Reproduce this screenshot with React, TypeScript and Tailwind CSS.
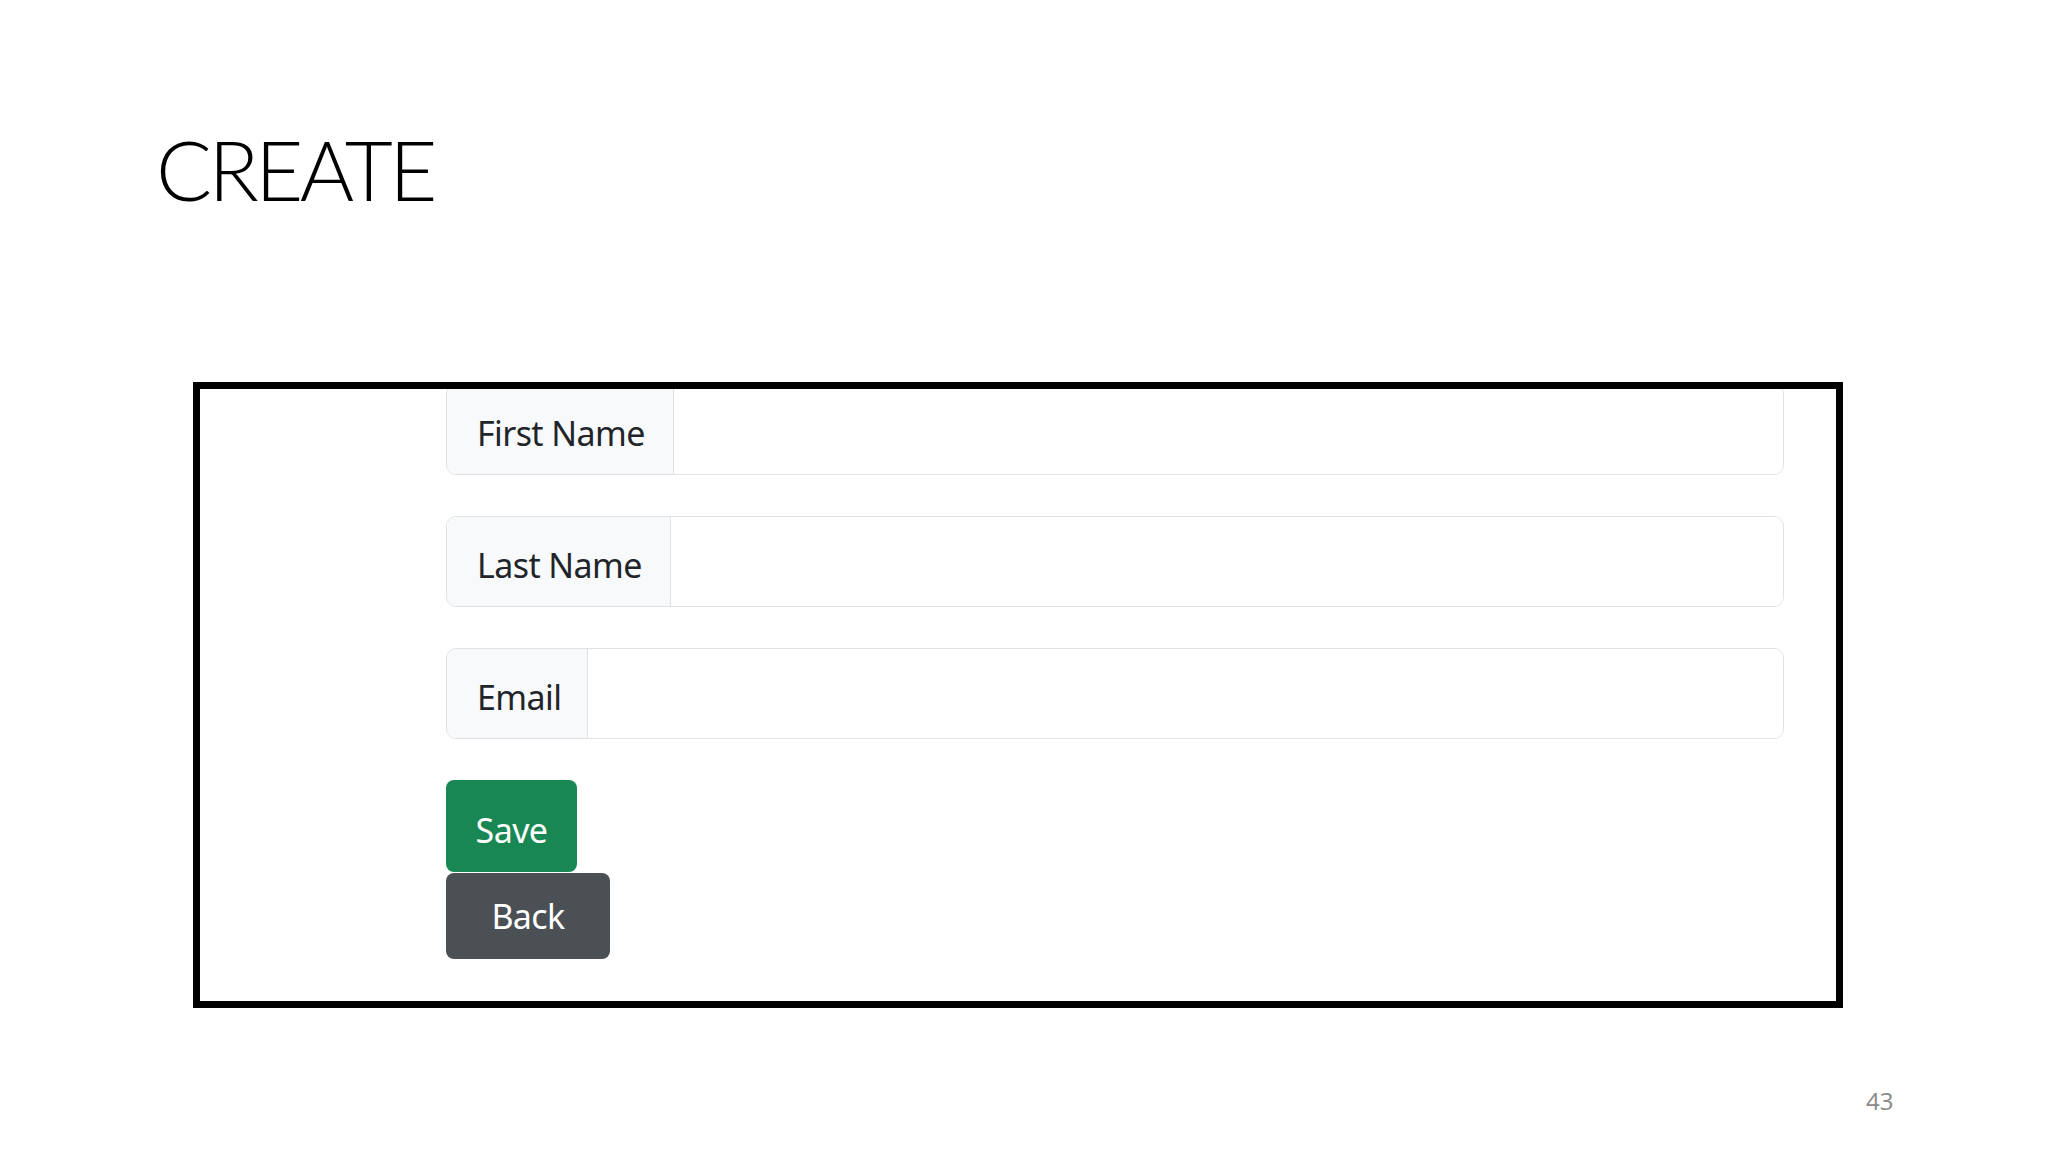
import React from "react";

const fields = [
  { label: "First Name", labelWidth: "w-[227px]" },
  { label: "Last Name", labelWidth: "w-[224px]" },
  { label: "Email", labelWidth: "w-[141px]" },
];

const App = () => {
  return (
    <div className="w-[2048px] h-[1152px] bg-white relative overflow-hidden font-['Noto_Sans',sans-serif]">
      {/* Slide title */}
      <h1 className="pl-[156px] pt-[119px] h-[382px] font-['Lato',sans-serif] font-light text-[83px] leading-[100px] text-black tracking-[-3.6px]">
        CREATE
      </h1>

      {/* Screenshot frame */}
      <div className="ml-[193px] w-[1650px] h-[626px] border-[7px] border-black overflow-hidden pl-[246px] pr-[52px]">
        <div className="flex flex-col gap-[41px] -mt-[5px]">
          {fields.map((f) => (
            <div
              key={f.label}
              className="flex h-[91px] border border-[#dee2e6] rounded-[10px] overflow-hidden"
            >
              <div
                className={`${f.labelWidth} shrink-0 flex items-center pl-[30px] pt-[8px] bg-[#f8f9fa] border-r border-[#dee2e6] text-[34px] tracking-[-0.6px] text-[#212529]`}
              >
                {f.label}
              </div>
              <input className="flex-1 bg-white outline-none" />
            </div>
          ))}

          <div className="flex flex-col gap-[1px]">
            <button className="w-[131px] h-[92px] pt-[8px] rounded-[8px] bg-[#198754] text-white text-[34px] tracking-[-0.6px] flex items-center justify-center">
              Save
            </button>
            <button className="w-[164px] h-[86px] rounded-[8px] bg-[#4b5055] text-white text-[34px] tracking-[-0.6px] flex items-center justify-center">
              Back
            </button>
          </div>
        </div>
      </div>

      {/* Slide number */}
      <div className="absolute left-[1866px] top-[1083px] text-[24px] text-[#898989] font-['Open_Sans',sans-serif]">
        43
      </div>
    </div>
  );
};

export default App;
